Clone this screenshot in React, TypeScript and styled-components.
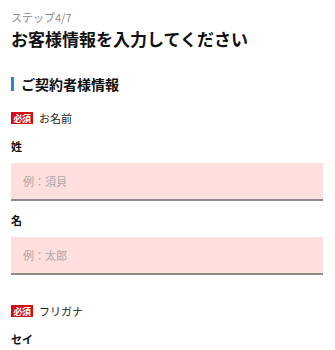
import styled, { createGlobalStyle } from 'styled-components';

const GlobalStyle = createGlobalStyle`
  html, body {
    margin: 0;
    padding: 0;
    background: #fff;
  }
  body {
    font-family: 'Noto Sans CJK JP', 'Noto Sans', sans-serif;
    color: #111;
  }
  * {
    box-sizing: border-box;
  }
`;

type Field = { label: string; placeholder: string };
type Group = { title: string; fields: Field[] };

const groups: Group[] = [
  {
    title: 'お名前',
    fields: [
      { label: '姓', placeholder: '例：須貝' },
      { label: '名', placeholder: '例：太郎' },
    ],
  },
  {
    title: 'フリガナ',
    fields: [{ label: 'セイ', placeholder: '例：スガイ' }],
  },
];

function App() {
  return (
    <>
      <GlobalStyle />
      <Page>
        <Step>ステップ4/7</Step>
        <Title>お客様情報を入力してください</Title>
        <SectionTitle>ご契約者様情報</SectionTitle>
        {groups.map((group) => (
          <FieldGroup key={group.title}>
            <RequiredRow>
              <Badge>必須</Badge>
              <GroupLabel>{group.title}</GroupLabel>
            </RequiredRow>
            {group.fields.map((field) => (
              <FieldBlock key={field.label}>
                <FieldLabel>{field.label}</FieldLabel>
                <Input type="text" placeholder={field.placeholder} />
              </FieldBlock>
            ))}
          </FieldGroup>
        ))}
      </Page>
    </>
  );
}

const Page = styled.main`
  display: flex;
  flex-direction: column;
  padding: 10px 12px 0 11px;
  width: 335px;
  height: 350px;
  overflow: hidden;
`;

const Step = styled.p`
  margin: 0;
  font-size: 11px;
  line-height: 15px;
  color: #888;
`;

const Title = styled.h1`
  margin: 2px 0 0;
  font-size: 17px;
  line-height: 23px;
  font-weight: 700;
  color: #111;
`;

const SectionTitle = styled.h2`
  margin: 27px 0 0;
  padding-left: 7px;
  border-left: 3px solid #1e8ad6;
  font-size: 14px;
  line-height: 14px;
  font-weight: 700;
  color: #111;
`;

const FieldGroup = styled.section`
  display: flex;
  flex-direction: column;
  margin-top: 20px;

  & + & {
    margin-top: 29px;
  }
`;

const RequiredRow = styled.div`
  display: flex;
  align-items: center;
  gap: 6px;
  height: 14px;
`;

const Badge = styled.span`
  display: inline-flex;
  align-items: center;
  justify-content: center;
  width: 22px;
  height: 12px;
  background: #d40c16;
  color: #fff;
  font-size: 9px;
  font-weight: 700;
  line-height: 1;
  letter-spacing: -0.5px;
`;

const GroupLabel = styled.span`
  font-size: 11px;
  line-height: 14px;
  color: #222;
`;

const FieldBlock = styled.div`
  display: flex;
  flex-direction: column;
  margin-top: 14px;

  & + & {
    margin-top: 12px;
  }
`;

const FieldLabel = styled.label`
  font-size: 11px;
  line-height: 14px;
  font-weight: 700;
  color: #111;
`;

const Input = styled.input`
  margin-top: 10px;
  width: 100%;
  height: 38px;
  padding: 0 12px;
  border: none;
  border-bottom: 2px solid #8c8c8c;
  background: #ffdede;
  font-family: inherit;
  font-size: 11px;
  color: #333;
  outline: none;

  &::placeholder {
    color: #a9a9a9;
  }
`;

export default App;
